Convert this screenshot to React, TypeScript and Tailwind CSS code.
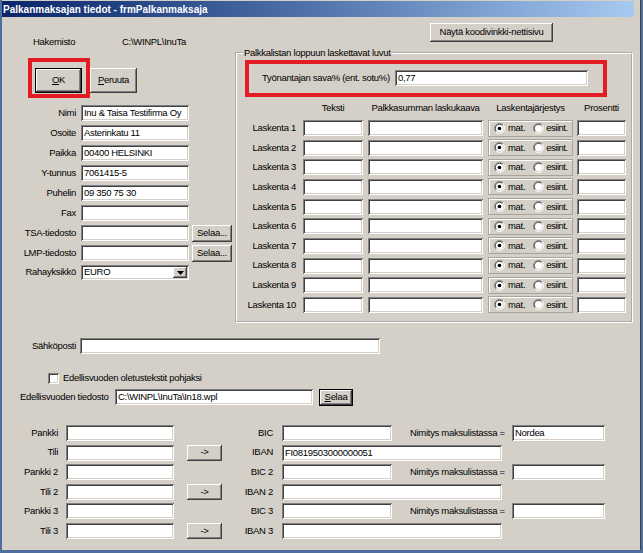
import React from 'react'

const sunken =
  'bg-white shadow-[inset_1px_1px_0_#808080,inset_-1px_-1px_0_#ffffff,inset_2px_2px_0_#404040,inset_-2px_-2px_0_#d4d0c8]'
const raised =
  'bg-[#d4d0c8] shadow-[inset_-1px_-1px_0_#404040,inset_1px_1px_0_#ffffff,inset_-2px_-2px_0_#808080,inset_2px_2px_0_#d4d0c8]'

function TextBox({ className = '', value = '' }: { className?: string; value?: string }) {
  return (
    <div className={`${sunken} h-[16px] shrink-0 pl-[3px] pt-[2px] leading-[12px] whitespace-nowrap overflow-hidden ${className}`}>
      {value}
    </div>
  )
}

function Button({
  className = '',
  children,
  isDefault = false,
}: {
  className?: string
  children: React.ReactNode
  isDefault?: boolean
}) {
  if (isDefault) {
    return (
      <div className={`border border-black shrink-0 flex ${className}`}>
        <div className={`${raised} flex-1 flex items-center justify-center`}>{children}</div>
      </div>
    )
  }
  return <div className={`${raised} shrink-0 flex items-center justify-center ${className}`}>{children}</div>
}

function Radio({ checked }: { checked: boolean }) {
  return (
    <svg width="11" height="11" viewBox="0 0 12 12" className="shrink-0">
      <circle cx="6" cy="6" r="5" fill="#fff" />
      <path d="M2.1 9.9 A5.5 5.5 0 0 1 9.9 2.1" stroke="#808080" fill="none" />
      <path d="M9.9 2.1 A5.5 5.5 0 0 1 2.1 9.9" stroke="#ffffff" fill="none" />
      <path d="M2.8 9.2 A4.5 4.5 0 0 1 9.2 2.8" stroke="#404040" fill="none" />
      <path d="M9.2 2.8 A4.5 4.5 0 0 1 2.8 9.2" stroke="#d4d0c8" fill="none" />
      {checked && <circle cx="6" cy="6" r="2" fill="#000" />}
    </svg>
  )
}

const leftFields: { label: string; value: string; browse?: boolean }[] = [
  { label: 'Nimi', value: 'Inu & Taisa Testifirma Oy' },
  { label: 'Osoite', value: 'Asterinkatu 11' },
  { label: 'Paikka', value: '00400 HELSINKI' },
  { label: 'Y-tunnus', value: '7061415-5' },
  { label: 'Puhelin', value: '09 350 75 30' },
  { label: 'Fax', value: '' },
  { label: 'TSA-tiedosto', value: '', browse: true },
  { label: 'LMP-tiedosto', value: '', browse: true },
]

const bankRows = [
  { left: 'Pankki', arrow: false, right: 'BIC', iban: false, name: 'Nordea' },
  { left: 'Tili', arrow: true, right: 'IBAN', iban: true, value: 'FI0819503000000051' },
  { left: 'Pankki 2', arrow: false, right: 'BIC 2', iban: false, name: '' },
  { left: 'Tili 2', arrow: true, right: 'IBAN 2', iban: true, value: '' },
  { left: 'Pankki 3', arrow: false, right: 'BIC 3', iban: false, name: '' },
  { left: 'Tili 3', arrow: true, right: 'IBAN 3', iban: true, value: '' },
]

export default function App() {
  return (
    <div className="w-[643px] h-[553px] bg-[#4f6f9c] pl-[2px] pr-[2px] pb-[3px] font-['Liberation_Sans',Arial,sans-serif] text-[9.5px] tracking-[-0.3px] text-black">
      <div className="h-full bg-[#d4d0c8] border-r border-[#404040] flex flex-col">
        {/* title bar */}
        <div className="mt-[1px] mr-[6px] h-[16px] bg-linear-to-r from-[#0a246a] to-[#a6caf0] flex items-center pl-[1px] text-white font-bold text-[10px] tracking-normal whitespace-nowrap">
          Palkanmaksajan tiedot - frmPalkanmaksaja
        </div>

        <div className="flex items-start">
          {/* left column */}
          <div className="w-[233px] shrink-0 flex flex-col">
            <div className="mt-[19px] h-[12px] leading-[12px] flex">
              <span className="ml-[31px] w-[89px]">Hakemisto</span>
              <span>C:\WINPL\InuTa</span>
            </div>

            <div className="mt-[10px] flex items-start">
              <div className="ml-[26px] w-[62px] h-[40px] border-[4px] border-[#e31b23] pt-[6px] pl-[3px]">
                <Button isDefault className="w-[47px] h-[25px]">
                  <span>
                    <u>O</u>K
                  </span>
                </Button>
              </div>
              <Button className="mt-[10px] w-[47px] h-[25px]">
                <span>
                  <u>P</u>eruuta
                </span>
              </Button>
            </div>

            <div className="mt-[7px] flex flex-col gap-[4px]">
              {leftFields.map((f) => (
                <div key={f.label} className="h-[16px] flex items-center">
                  <span className="w-[74px] text-right">{f.label}</span>
                  <TextBox className="ml-[5px] w-[108px]" value={f.value} />
                  {f.browse && <Button className="ml-[3px] w-[40px] h-[17px]">Selaa...</Button>}
                </div>
              ))}
              <div className="h-[15px] flex items-center">
                <span className="w-[74px] text-right">Rahayksikkö</span>
                <div className={`${sunken} ml-[5px] w-[108px] h-[15px] flex items-center justify-between pl-[3px] pr-[2px]`}>
                  <span>EURO</span>
                  <div className={`${raised} w-[14px] h-[11px] flex items-center justify-center`}>
                    <svg width="7" height="4" viewBox="0 0 7 4">
                      <path d="M0 0h7L3.5 4z" fill="#000" />
                    </svg>
                  </div>
                </div>
              </div>
            </div>
          </div>

          {/* right column */}
          <div className="w-[398px] shrink-0 flex flex-col">
            <Button className="ml-[195px] mt-[6px] w-[123px] h-[19px]">Näytä koodivinkki-nettisivu</Button>

            <fieldset className="mt-[5px] border-2 [border-style:groove] border-white pb-[8px]">
              <legend className="ml-[6px] px-[1px] leading-[12px]">Palkkalistan loppuun laskettavat luvut</legend>

              <div className="mt-[1px] ml-[8px] w-[362px] h-[37px] border-[4px] border-[#e31b23] pt-[6px] pl-[13px] flex items-start">
                <span className="w-[133px] leading-[16px] whitespace-nowrap">Työnantajan sava% (ent. sotu%)</span>
                <TextBox className="w-[193px]" value="0,77" />
              </div>

              <div className="mt-[5px] h-[12px] leading-[12px] flex whitespace-nowrap">
                <span className="ml-[66px] w-[60px] text-center">Teksti</span>
                <span className="ml-[5px] w-[115px] text-center">Palkkasumman laskukaava</span>
                <span className="ml-[5px] w-[85px] text-center">Laskentajärjestys</span>
                <span className="ml-[4px] w-[49px] text-center">Prosentti</span>
              </div>

              <div className="mt-[6px] flex flex-col gap-[3.67px]">
                {Array.from({ length: 10 }, (_, i) => (
                  <div key={i} className="h-[16px] flex items-center">
                    <span className="w-[59px] text-right whitespace-nowrap">Laskenta {i + 1}</span>
                    <TextBox className="ml-[7px] w-[60px]" />
                    <TextBox className="ml-[5px] w-[115px]" />
                    <div className="ml-[5px] w-[85px] h-[17px] border border-[#a8a49c] shadow-[inset_1px_1px_0_#ffffff] flex items-center pl-[5px] whitespace-nowrap">
                      <Radio checked />
                      <span className="ml-[3px]">mat.</span>
                      <span className="ml-[8px] flex items-center">
                        <Radio checked={false} />
                      </span>
                      <span className="ml-[2px] tracking-[-0.5px]">esiint.</span>
                    </div>
                    <TextBox className="ml-[4px] w-[49px]" />
                  </div>
                ))}
              </div>
            </fieldset>
          </div>
        </div>

        {/* e-mail */}
        <div className="mt-[15px] h-[16px] flex items-center">
          <span className="w-[74px] text-right">Sähköposti</span>
          <TextBox className="ml-[4px] w-[300px]" />
        </div>

        <div className="mt-[19px] h-[11px] flex items-center">
          <div className={`${sunken} ml-[46px] w-[11px] h-[11px]`} />
          <span className="ml-[4px]">Edellisvuoden oletustekstit pohjaksi</span>
        </div>

        <div className="mt-[5px] h-[17px] flex items-center">
          <span className="w-[113px] pl-[18px] whitespace-nowrap">Edellisvuoden tiedosto</span>
          <TextBox className="w-[198px]" value="C:\WINPL\InuTa\In18.wpl" />
          <Button isDefault className="ml-[6px] w-[34px] h-[17px]">
            <span>
              <u>S</u>elaa
            </span>
          </Button>
        </div>

        {/* bank accounts */}
        <div className="mt-[19px] flex flex-col gap-[3.6px]">
          {bankRows.map((r) => (
            <div key={r.left} className="h-[16px] flex items-center whitespace-nowrap">
              <span className="w-[56px] text-right">{r.left}</span>
              <TextBox className="ml-[8px] w-[108px]" />
              <div className="ml-[13px] w-[35px] shrink-0">
                {r.arrow && <Button className="w-[35px] h-[16px]">-&gt;</Button>}
              </div>
              <span className="w-[51px] text-right">{r.right}</span>
              {r.iban ? (
                <TextBox className="ml-[9px] w-[220px]" value={r.value} />
              ) : (
                <>
                  <TextBox className="ml-[9px] w-[110px]" />
                  <span className="ml-[18px] w-[90px]">Nimitys maksulistassa =</span>
                  <TextBox className="ml-[12px] w-[93px]" value={r.name} />
                </>
              )}
            </div>
          ))}
        </div>
      </div>
    </div>
  )
}
